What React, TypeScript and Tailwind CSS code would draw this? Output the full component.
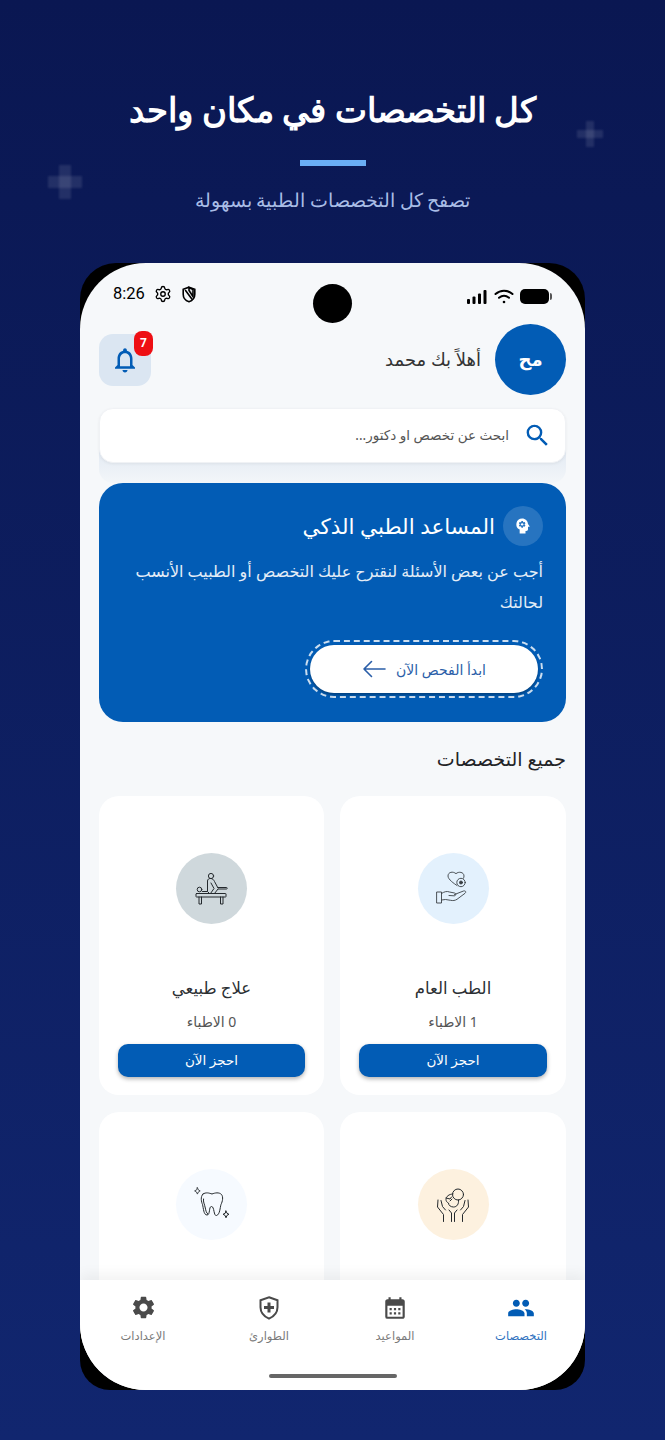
import { Settings } from "lucide-react";
import { MdCalendarMonth, MdNotificationsNone, MdPeople, MdPsychology, MdSearch, MdSettings } from "react-icons/md";

const font = "font-['Noto_Sans','DejaVu_Sans',sans-serif]";
const titleFont = "font-['Liberation_Serif','DejaVu_Serif',serif]";

function Plus({ className }: { className: string }) {
  return (
    <div className={`absolute blur-[1px] ${className}`}>
      <div className="absolute left-1/3 top-0 h-full w-1/3 bg-white/10" />
      <div className="absolute left-0 top-1/3 h-1/3 w-full bg-white/10" />
    </div>
  );
}

function StatusBar() {
  return (
    <div dir="ltr" className="relative flex h-[61px] shrink-0 items-end justify-between pb-[20px] pl-[33px] pr-[33px]">
      <div className="flex items-center gap-[9px] text-black">
        <span className="font-['Roboto',sans-serif] text-[16.500px] leading-5">8:26</span>
        <Settings size={18} strokeWidth={1.8} />
        <svg className="ml-[1px]" width="14" height="17" viewBox="0 0 14 17" fill="none" stroke="black" strokeWidth="1.6">
          <path d="M7 1.200l5.800 2.100v4.900c0 3.600-2.400 6.400-5.800 7.500-3.400-1.100-5.800-3.900-5.800-7.500V3.300z" />
          <path d="M3.200 4l7 9.500M7 1.500v3l4 6V3.500z" fill="black" fillOpacity="0.1" />
        </svg>
      </div>
      <div className="absolute left-[233px] top-[21px] h-[39px] w-[39px] rounded-full bg-black" />
      <div className="flex items-center gap-[6px]">
        <svg width="21" height="14" viewBox="0 0 21 14" fill="black">
          <rect x="0" y="9" width="3" height="5" rx="1" />
          <rect x="5.500" y="6.500" width="3" height="7.500" rx="1" />
          <rect x="11" y="3.500" width="3" height="10.500" rx="1" />
          <rect x="16.500" y="0" width="3" height="14" rx="1" />
        </svg>
        <svg width="20" height="15" viewBox="0 0 20 15" fill="none" stroke="black" strokeWidth="2" strokeLinecap="round">
          <path d="M1.500 5C6.500 .6 13.500 .6 18.500 5" />
          <path d="M5 8.800c3-2.500 7-2.500 10 0" />
          <circle cx="10" cy="13" r="1.300" fill="black" stroke="none" />
        </svg>
        <div className="flex items-center">
          <div className="h-[15px] w-[29px] rounded-[5px] bg-black" />
          <div className="ml-[1px] h-[7px] w-[2px] rounded-r-sm bg-[#555]" />
        </div>
      </div>
    </div>
  );
}

function HandHeart() {
  return (
    <svg width="36" height="36" viewBox="0 0 36 36" fill="none" stroke="#3a3f44" strokeWidth="0.9" strokeLinejoin="round" strokeLinecap="round">
      <path d="M22 14.500c-3-2-9-6-9-9.500 0-4 5-5 8-2.300 2.500-2.500 8-1.700 8 2.300 0 .8-.2 1.500-.5 2.200" />
      <circle cx="26" cy="11.500" r="4.200" />
      <circle cx="26" cy="11.500" r="1.500" fill="#3a3f44" />
      <rect x="2" y="21" width="4.500" height="11" />
      <path d="M6.500 22.500c3-2 5.500-2.500 8-1.500l5 1c2 .5 1.500 3-.5 2.800l-5-.3" />
      <path d="M19.500 23.500l9-3.500c2-.5 3 1 1.500 2.300l-8 6c-2 1.300-4 1.500-6.500 1l-5-.8-4 .5" />
    </svg>
  );
}

function Massage() {
  return (
    <svg width="36" height="36" viewBox="0 -2 36 36" fill="none" stroke="#24292d" strokeWidth="1" strokeLinejoin="round" strokeLinecap="round">
      <circle cx="17" cy="3" r="2.600" />
      <path d="M13.500 18V8c0-1.800 1.500-2.500 3-2.500 2 0 3 1 4 3l3.500 6.500" />
      <path d="M17 10l3 5.500-3.500 5" />
      <path d="M24 14.500h8.500c1 0 1 1.500 0 1.500H24l-3.500 4.500" />
      <circle cx="5.500" cy="16.500" r="2.300" />
      <path d="M8.500 18.500h5l2 2H3" />
      <rect x="2" y="20.500" width="30" height="3.500" rx=".5" />
      <path d="M5 24v7h2.500v-7M26.500 24v7H29v-7" />
    </svg>
  );
}

function Baby() {
  return (
    <svg width="36" height="36" viewBox="0 0 36 36" fill="none" stroke="#24292d" strokeWidth="1" strokeLinejoin="round" strokeLinecap="round">
      <circle cx="23" cy="7.500" r="5.500" />
      <path d="M18 7c-4 0-7 2.500-7 5.500 0 1.500 1 3 2.500 3.500 0 2.500 2.500 4 5 4 3.500 0 5.500-3 5-7" />
      <path d="M11 11l4 1 1.500-2M15 14l2-2" />
      <path d="M3 13l-.5 7 6 7.500v7M6 13.500l1.500 6 3 3.500" />
      <path d="M33 13l.5 7-6 7.500v7M30 13.500l-1.500 6-3 3.500" />
      <path d="M14 23l2.500 3v8.500M22 23l-2.500 3v8.500" />
    </svg>
  );
}

function Tooth() {
  return (
    <svg width="36" height="36" viewBox="0 0 36 36" fill="none" stroke="#24292d" strokeWidth="1" strokeLinejoin="round" strokeLinecap="round">
      <path d="M9 7c3-2 6-1 9 0 3-1.200 7-2 9.500.5 2 2.500 1 7-.5 10-1 3-1 10-4.500 11-3 .8-2-9-5-9s-1 8.500-4.500 8.500c-3.500 0-3.500-7-4.500-10.500C7.500 15 6 10 9 7z" />
      <path d="M9.500 12c-.5 3 1 5 1.800 9 .5 2.500 1 5 2.500 6" />
      <path d="M3 1.500l1.200 2.800L6.500 5.500 4.200 6.800 3 9.500 1.800 6.800-.5 5.500l2.300-1.200z" transform="translate(1 -.5) scale(.8)" />
      <path d="M32 24l1 2.300 2 1-2 1-1 2.500-1-2.500-2-1 2-1z" />
    </svg>
  );
}

function Specialty({ name, count, bg, icon }: { name?: string; count?: string; bg: string; icon: React.ReactNode }) {
  return (
    <div className="flex h-[299px] flex-col items-center rounded-[20px] bg-white px-[19px] pt-[57px]">
      <div className={`flex h-[71px] w-[71px] items-center justify-center rounded-full ${bg}`}>{icon}</div>
      {name && (
        <>
          <div className="mt-[52px] text-[16.500px] leading-6 text-[#2b2f33]">{name}</div>
          <div className="mt-[12px] text-[14px] leading-5 text-[#555]">{count}</div>
          <button className="mt-[12px] h-[33px] w-full rounded-[10px] bg-[#025cb5] text-[13.500px] text-white shadow-[0_2px_4px_rgba(0,0,0,0.3)]">
            احجز الآن
          </button>
        </>
      )}
    </div>
  );
}

function NavItem({ label, icon, active }: { label: string; icon: React.ReactNode; active?: boolean }) {
  return (
    <div className={`flex w-[126px] flex-col items-center ${active ? "text-[#025cb5]" : "text-[#4a4a4a]"}`}>
      <div className="flex h-[27px] items-center">{icon}</div>
      <span className={`mt-[5px] text-[11.500px] leading-5 ${active ? "text-[#2f72c0]" : "text-[#7a7a7a]"}`}>{label}</span>
    </div>
  );
}

export default function App() {
  return (
    <div dir="rtl" className={`relative flex h-[1440px] w-[665px] flex-col items-center overflow-hidden bg-gradient-to-b from-[#0a1752] to-[#11266f] ${font}`}>
      <Plus className="left-[48px] top-[165px] h-[34px] w-[34px]" />
      <Plus className="left-[577px] top-[121px] h-[26px] w-[26px]" />

      <h1 className={`mt-[84px] h-[54px] text-[34px] font-bold leading-[54px] text-white ${titleFont}`}>كل التخصصات في مكان واحد</h1>
      <div className="mt-[22px] h-[6px] w-[66px] bg-[#6aaef5]" />
      <p className={`mt-[19px] text-[18.800px] leading-8 text-[#a9bde6] ${titleFont}`}>تصفح كل التخصصات الطبية بسهولة</p>

      <div className="mt-[46px] flex h-[1127px] w-[505px] shrink-0 rounded-t-[36px] rounded-b-[30px] bg-black">
        <div className="flex w-full flex-col overflow-hidden rounded-[66px] bg-[#f6f8fa]">
          <StatusBar />

          <div className="flex min-h-0 flex-1 flex-col overflow-hidden px-[19px]">
            {/* Header */}
            <div className="flex h-[71px] shrink-0 items-center">
              <div className="flex h-[71px] w-[71px] items-center justify-center rounded-full bg-[#025cb5] text-[18px] font-bold text-white">مح</div>
              <div className="mr-[14px] flex-1 text-[18px] text-[#333]">أهلاً بك محمد</div>
              <div className="relative flex h-[52px] w-[52px] items-center justify-center rounded-[14px] bg-[#dbe6f2]">
                <MdNotificationsNone size={30} color="#025cb5" />
                <div className="absolute -top-[3px] left-[35px] flex h-[25px] w-[19px] items-center justify-center rounded-[8px] bg-[#ee0f14] font-['Roboto',sans-serif] text-[12px] font-bold text-white">7</div>
              </div>
            </div>

            {/* Search */}
            <div className="mt-[13px] shrink-0 rounded-b-[14px] bg-gradient-to-b from-transparent from-50% via-[#e0e8f2] via-50% to-[#f3f6f9] pb-[20px]">
              <div className="flex h-[55px] items-center rounded-[14px] border border-[#f0f2f5] bg-white pr-[13px] shadow-[0_1px_3px_rgba(0,0,0,0.06)]">
                <MdSearch size={29} color="#025cb5" />
                <span className="mr-[14px] text-[13.500px] text-[#555]">ابحث عن تخصص او دكتور...</span>
              </div>
            </div>

            {/* Assistant card */}
            <div className="flex h-[239px] shrink-0 flex-col rounded-[24px] bg-[#025cb5] px-[23px] pt-[23px] text-white">
              <div className="flex items-center gap-[8px]">
                <div className="flex h-[40px] w-[40px] items-center justify-center rounded-full bg-white/15">
                  <MdPsychology size={20} className="-scale-x-100" />
                </div>
                <div className="text-[21.500px] leading-8">المساعد الطبي الذكي</div>
              </div>
              <p className="mt-[10px] text-[16px] leading-[31px] text-[#e4edf7]">أجب عن بعض الأسئلة لنقترح عليك التخصص أو الطبيب الأنسب لحالتك</p>
              <div className="mt-[22px] w-[238px] rounded-full border-2 border-dashed border-white/80 p-[3px]">
                <div className="flex h-[48px] items-center justify-center gap-[10px] rounded-full bg-white text-[14px] text-[#2a5ea8] shadow-[0_2px_3px_rgba(0,0,0,0.3)]">
                  <span>ابدأ الفحص الآن</span>
                  <svg width="24" height="18" viewBox="0 0 24 18" fill="none" stroke="currentColor" strokeWidth="1.600" strokeLinecap="round" strokeLinejoin="round">
                    <path d="M23 9H2M9.500 1.500L2 9l7.500 7.500" />
                  </svg>
                </div>
              </div>
            </div>

            <h2 className="mt-[23px] shrink-0 text-[19px] leading-[28px] text-[#1f2326]">جميع التخصصات</h2>

            {/* Specialties */}
            <div className="mt-[23px] grid grid-cols-[226px_225px] gap-x-[16px] gap-y-[17px]">
              <Specialty name="الطب العام" count="1 الاطباء" bg="bg-[#e3f1fd]" icon={<HandHeart />} />
              <Specialty name="علاج طبيعي" count="0 الاطباء" bg="bg-[#cfd8dc]" icon={<Massage />} />
              <Specialty bg="bg-[#fdf1df]" icon={<Baby />} />
              <Specialty bg="bg-[#f6faff]" icon={<Tooth />} />
            </div>
          </div>

          {/* Bottom nav */}
          <div className="relative z-10 flex h-[110px] shrink-0 flex-col bg-white shadow-[0_-6px_12px_rgba(0,0,0,0.05)]">
            <div className="flex pr-[1px] pt-[14px]">
              <NavItem active label="التخصصات" icon={<MdPeople size={28} />} />
              <NavItem label="المواعيد" icon={<MdCalendarMonth size={26} />} />
              <NavItem
                label="الطوارئ"
                icon={
                  <svg width="20" height="24" viewBox="0 0 20 24">
                    <path d="M10 1.200l8.500 3v7c0 5.200-3.500 9.200-8.500 11.500C5 20.400 1.500 16.400 1.500 11.200v-7z" fill="none" stroke="currentColor" strokeWidth="2" />
                    <path d="M8.500 6.500h3v3.500H15v3h-3.500v3.500h-3V13H5v-3h3.500z" fill="currentColor" />
                  </svg>
                }
              />
              <NavItem label="الإعدادات" icon={<MdSettings size={27} />} />
            </div>
            <div className="mx-auto mt-[28px] h-[4px] w-[128px] rounded-full bg-[#666]" />
          </div>
        </div>
      </div>
    </div>
  );
}
